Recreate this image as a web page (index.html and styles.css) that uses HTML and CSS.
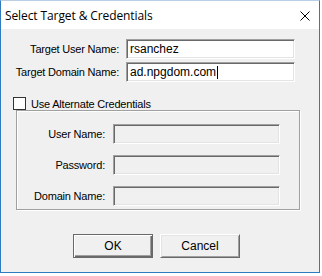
FILE: index.html
```html
<!DOCTYPE html>
<html lang="en">
<head>
    <meta charset="UTF-8">
    <title>Select Target &amp; Credentials</title>
    <link rel="stylesheet" href="styles.css">
</head>
<body>
    <div class="window">
        <div class="titlebar">
            <div class="title">Select Target &amp; Credentials</div>
            <svg class="close-icon" width="10" height="10" viewBox="0 0 10 10">
                <path d="M0.5 0.5 L9.5 9.5 M9.5 0.5 L0.5 9.5" stroke="#000" stroke-width="1" fill="none"/>
            </svg>
        </div>

        <div class="dialog">
            <div class="target-grid">
                <label class="label">Target User Name:</label>
                <div class="field"><span>rsanchez</span></div>
                <label class="label">Target Domain Name:</label>
                <div class="field"><span>ad.npgdom.com</span><span class="caret"></span></div>
            </div>

            <div class="check-row">
                <span class="checkbox"></span>
                <span class="check-label">Use Alternate Credentials</span>
            </div>

            <div class="group-box">
                <div class="cred-grid">
                    <label class="label">User Name:</label>
                    <div class="field disabled"></div>
                    <label class="label">Password:</label>
                    <div class="field disabled"></div>
                    <label class="label">Domain Name:</label>
                    <div class="field disabled"></div>
                </div>
            </div>

            <div class="buttons">
                <button class="btn btn-default">OK</button>
                <button class="btn">Cancel</button>
            </div>
        </div>
    </div>
</body>
</html>
```

FILE: styles.css
```css
body {
    margin: 0;
    padding: 0;
    background-color: #fff;
    font-family: 'Liberation Sans', Arial, sans-serif;
    font-size: 11px;
    color: #000;
}

.window {
    width: 320px;
    height: 273px;
    box-sizing: border-box;
    border: 1px solid #2f7bbf;
    border-top-color: #b9cfe4;
    display: flex;
    flex-direction: column;
}

.titlebar {
    height: 28px;
    background-color: #fff;
    display: flex;
    justify-content: space-between;
    align-items: center;
    padding: 0 9px 0 4px;
}

.title {
    font-family: 'Open Sans', 'Liberation Sans', sans-serif;
    font-size: 12px;
    letter-spacing: -0.1px;
}

.close-icon {
    display: block;
    margin-top: 2px;
}

.dialog {
    flex: 1;
    background-color: #f0f0f0;
    padding-top: 10px;
}

.label {
    text-align: right;
    letter-spacing: -0.2px;
    align-self: center;
}

.target-grid {
    display: grid;
    grid-template-columns: 118px 169px;
    column-gap: 7px;
    row-gap: 3px;
}

.field {
    height: 20px;
    box-sizing: border-box;
    background-color: #fff;
    border-top: 1px solid #a0a0a0;
    border-left: 1px solid #a0a0a0;
    border-right: 1px solid #fff;
    border-bottom: 1px solid #fff;
    box-shadow: inset 1px 1px 0 #696969, inset -1px -1px 0 #e3e3e3;
    padding: 0 3px;
    display: flex;
    align-items: center;
    font-size: 12px;
}

.field.disabled {
    background-color: #f0f0f0;
}

.caret {
    display: inline-block;
    width: 1px;
    height: 13px;
    background-color: #000;
    margin-left: 1px;
}

.check-row {
    display: flex;
    align-items: center;
    margin-top: 15px;
    padding-left: 12px;
    height: 13px;
}

.checkbox {
    width: 13px;
    height: 13px;
    box-sizing: border-box;
    border: 1px solid #333;
    background-color: #fff;
}

.check-label {
    margin-left: 5px;
    letter-spacing: -0.2px;
}

.group-box {
    margin-left: 15px;
    width: 284px;
    height: 100px;
    box-sizing: border-box;
    border: 1px solid #a0a0a0;
    box-shadow: inset 1px 1px 0 #fff, 1px 1px 0 #fff;
    padding-top: 13px;
}

.cred-grid {
    display: grid;
    grid-template-columns: 88px 167px;
    column-gap: 8px;
    row-gap: 11px;
}

.buttons {
    display: flex;
    gap: 7px;
    margin-top: 24px;
    padding-left: 72px;
}

.btn {
    width: 80px;
    height: 24px;
    box-sizing: border-box;
    background-color: #f0f0f0;
    font-family: 'Liberation Sans', Arial, sans-serif;
    font-size: 12px;
    color: #000;
    padding: 0;
    border-top: 1px solid #fff;
    border-left: 1px solid #fff;
    border-right: 1px solid #696969;
    border-bottom: 1px solid #696969;
    box-shadow: inset 1px 1px 0 #e3e3e3, inset -1px -1px 0 #a0a0a0;
}

.btn-default {
    border: 1px solid #696969;
    box-shadow: inset 1px 1px 0 #fff, inset -1px -1px 0 #696969, inset -2px -2px 0 #a0a0a0;
}
```
